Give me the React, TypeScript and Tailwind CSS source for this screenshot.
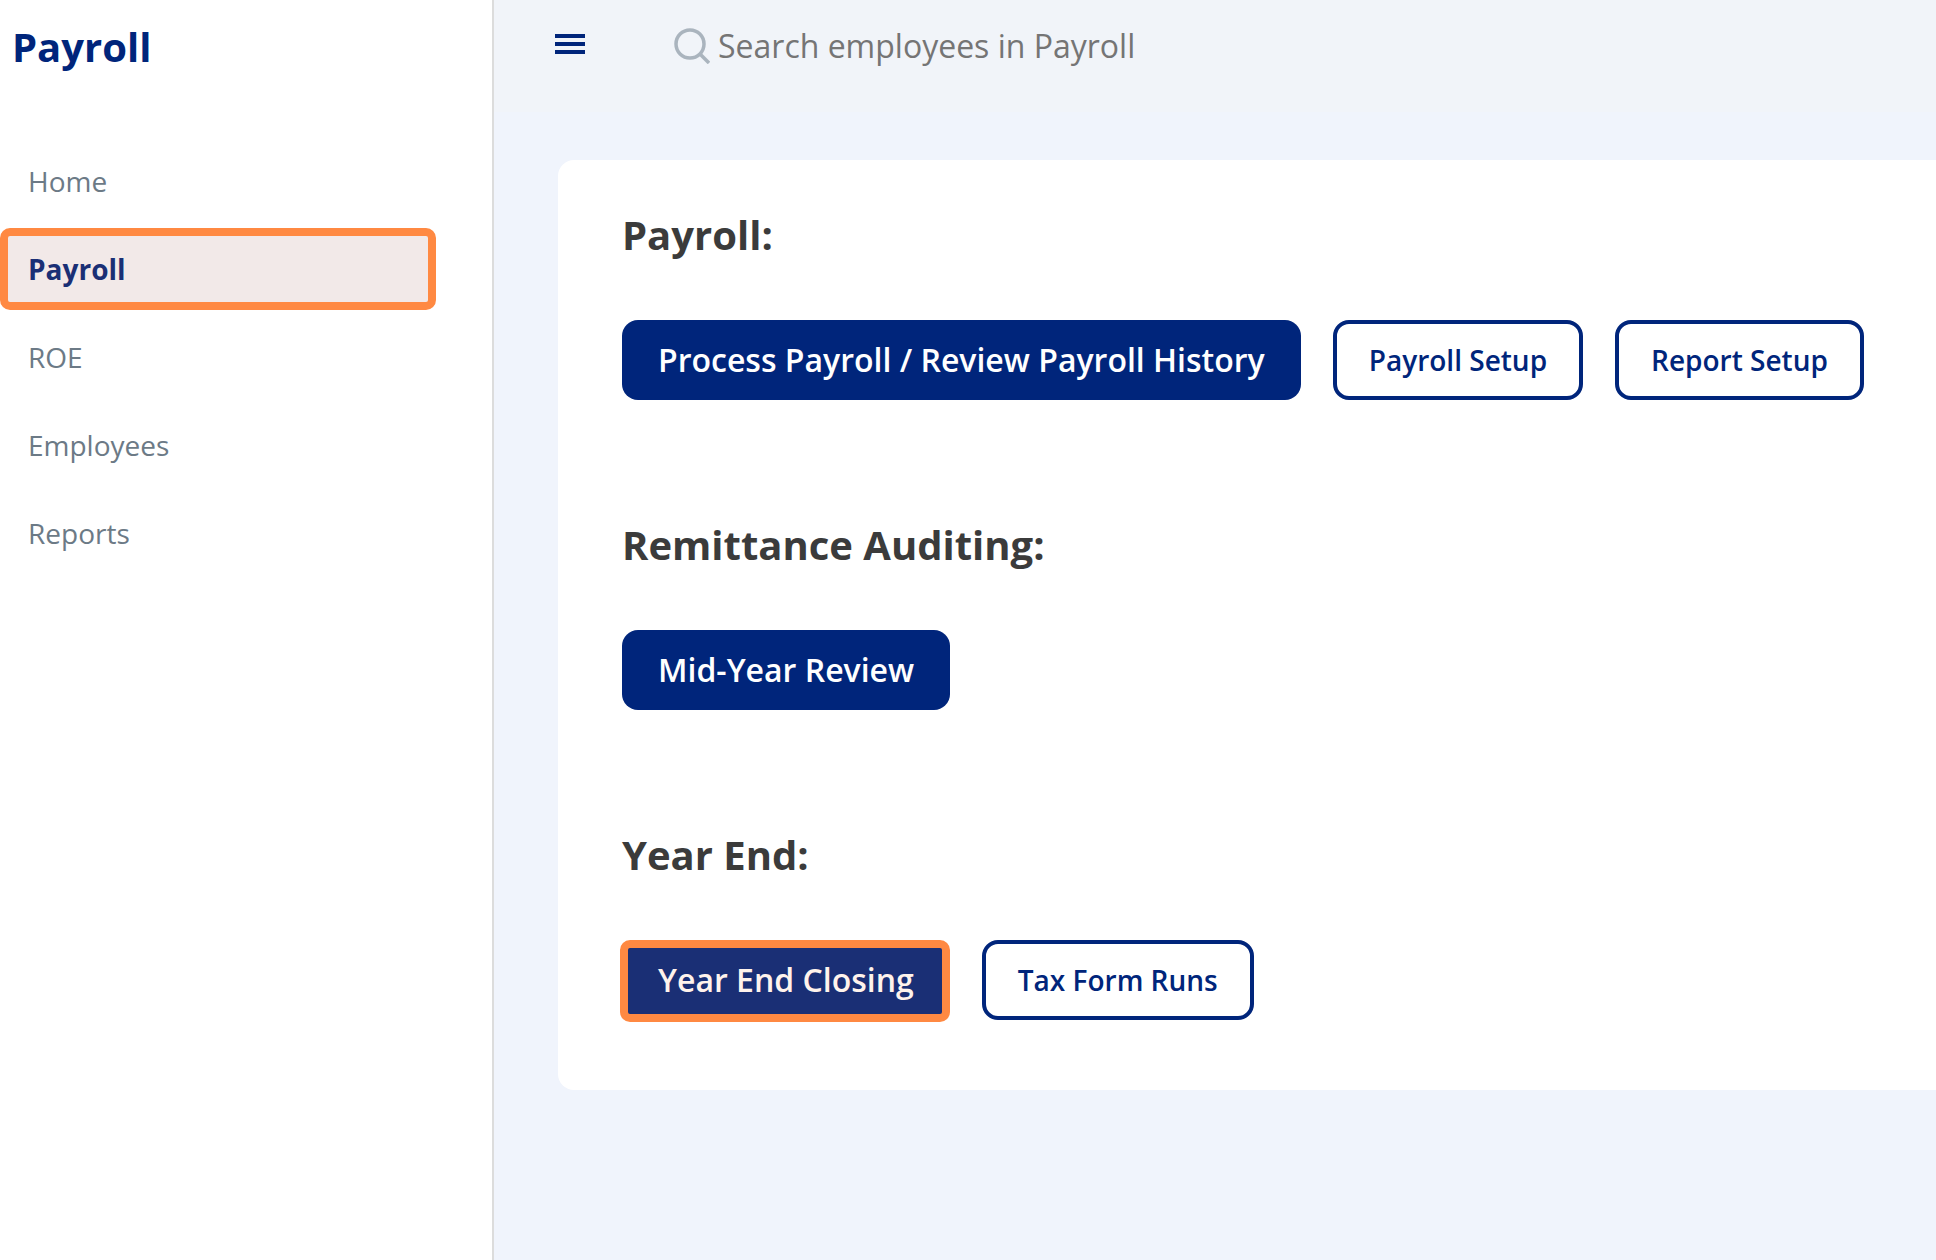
import { useState } from 'react';

interface Action {
  label: string;
  primary?: boolean;
  highlighted?: boolean;
}

interface Section {
  title: string;
  actions: Action[];
}

const navItems = ['Home', 'Payroll', 'ROE', 'Employees', 'Reports'];

const sections: Section[] = [
  {
    title: 'Payroll:',
    actions: [
      { label: 'Process Payroll / Review Payroll History', primary: true },
      { label: 'Payroll Setup' },
      { label: 'Report Setup' },
    ],
  },
  {
    title: 'Remittance Auditing:',
    actions: [{ label: 'Mid-Year Review', primary: true }],
  },
  {
    title: 'Year End:',
    actions: [
      { label: 'Year End Closing', primary: true, highlighted: true },
      { label: 'Tax Form Runs' },
    ],
  },
];

function Sidebar() {
  return (
    <aside className="w-[494px] shrink-0 border-r-2 border-[#dcdcdc] bg-white">
      <h1 className="px-3 pt-5 text-[40px] leading-[54px] font-bold text-[#00257b]">Payroll</h1>
      <nav className="mt-[66px] flex flex-col gap-1.5">
        {navItems.map((item) =>
          item === 'Payroll' ? (
            <a
              key={item}
              href="#"
              aria-current="page"
              className="mr-14 flex h-[82px] items-center rounded-[10px] border-8 border-[#ff8942] bg-[#f2e9e8] pl-5 text-[28px] font-bold text-[#1a2f75]"
            >
              {item}
            </a>
          ) : (
            <a
              key={item}
              href="#"
              className="mr-14 flex h-[82px] items-center pl-7 text-[28px] text-[#6c7a86]"
            >
              {item}
            </a>
          )
        )}
      </nav>
    </aside>
  );
}

function Header() {
  const [query, setQuery] = useState('');

  return (
    <header className="flex h-28 items-start bg-[#f1f4f9] pt-4 pl-15">
      <button type="button" aria-label="Toggle menu" className="flex h-14 w-8 items-center">
        <svg className="h-5 w-8 text-[#00257b]" viewBox="0 0 32 20" fill="currentColor">
          <rect x="1" width="30" height="4" />
          <rect x="1" y="8" width="30" height="4" />
          <rect x="1" y="16" width="30" height="4" />
        </svg>
      </button>
      <div className="ml-22 flex h-15 flex-1 items-center gap-2">
        <label htmlFor="employee-search" aria-label="Search employees">
          <svg className="size-9 text-[#aab4be]" viewBox="0 0 36 36" fill="none" stroke="currentColor" strokeWidth={3.5}>
            <circle cx="16" cy="16" r="14" />
            <path d="M26 26l9 9" />
          </svg>
        </label>
        <input
          id="employee-search"
          type="text"
          value={query}
          onChange={(e) => setQuery(e.target.value)}
          placeholder="Search employees in Payroll"
          className="h-12 min-w-0 flex-1 bg-transparent text-[32px] text-[#333] outline-none placeholder:text-[#757575]"
        />
      </div>
    </header>
  );
}

function ActionButton({ label, primary, highlighted }: Action) {
  if (!primary) {
    return (
      <button
        type="button"
        className="h-20 rounded-2xl border-4 border-[#00257b] bg-white px-8 text-[28px] font-semibold text-[#00257b]"
      >
        {label}
      </button>
    );
  }

  return (
    <button
      type="button"
      className="relative h-20 rounded-2xl bg-[#00257b] px-9 text-[32px] font-semibold text-white"
    >
      {label}
      {highlighted && (
        <span className="absolute top-0 right-0 -bottom-0.5 -left-0.5 rounded-[10px] border-8 border-[#ff8942] bg-[#ff8942]/10" />
      )}
    </button>
  );
}

export default function App() {
  return (
    <div className="flex min-h-screen overflow-x-hidden bg-[#f0f4fc] font-['Open_Sans',sans-serif]">
      <Sidebar />
      <div className="min-w-0 flex-1">
        <Header />
        <main className="pt-12 pl-16">
          <div className="flex flex-col gap-[118px] rounded-l-2xl bg-white px-16 pt-12 pb-[70px]">
            {sections.map((section) => (
              <section key={section.title}>
                <h2 className="text-[40px] leading-[54px] font-bold text-[#3b3b3b]">{section.title}</h2>
                <div className="mt-[58px] flex gap-8 whitespace-nowrap">
                  {section.actions.map((action) => (
                    <ActionButton key={action.label} {...action} />
                  ))}
                </div>
              </section>
            ))}
          </div>
        </main>
      </div>
    </div>
  );
}
